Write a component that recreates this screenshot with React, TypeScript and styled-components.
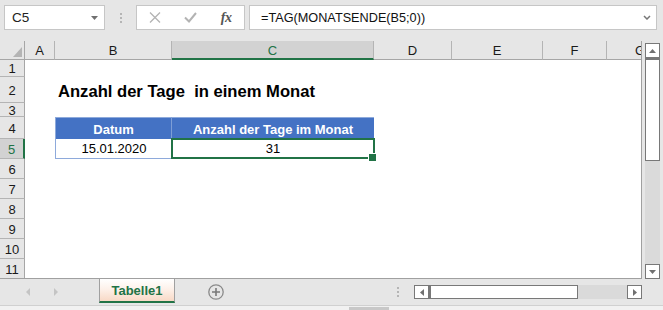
import React from 'react';
import styled, { createGlobalStyle, css } from 'styled-components';

const GlobalStyle = createGlobalStyle`
  html, body { margin: 0; padding: 0; background: #e6e6e6; }
  body { font-family: "Liberation Sans", Arial, sans-serif; }
  * { box-sizing: border-box; }
`;

const GREEN = '#217346';
const UI_FONT = '"Liberation Sans", Arial, sans-serif';

const Page = styled.div`
  width: 663px;
  height: 310px;
  display: flex;
  flex-direction: column;
  background: #e6e6e6;
  overflow: hidden;
  font-family: ${UI_FONT};
`;

/* ---------- formula bar ---------- */
const FormulaBar = styled.div`
  height: 41px;
  flex: none;
  display: flex;
  align-items: flex-start;
  padding: 5px 0 0 4px;
`;

const Box = styled.div`
  height: 25px;
  background: #fff;
  border: 1px solid #c6c6c6;
  display: flex;
  align-items: center;
`;

const NameBox = styled(Box)`
  width: 101px;
  padding: 0 6px 0 7px;
  justify-content: space-between;
  font-size: 13.5px;
  color: #222;
`;

const Grip = styled.div`
  width: 31px;
  height: 25px;
  display: flex;
  flex-direction: column;
  align-items: center;
  justify-content: center;
  gap: 2px;
`;

const GripDot = styled.span`
  width: 2px;
  height: 2px;
  background: #b5b5b5;
`;

const FxBox = styled(Box)`
  width: 109px;
  padding: 0;
`;

const FxSlot = styled.div`
  flex: 1;
  height: 100%;
  display: flex;
  align-items: center;
  justify-content: center;
`;

const FxText = styled.span`
  font-family: "Liberation Serif", "Times New Roman", serif;
  font-style: italic;
  font-weight: 700;
  font-size: 14px;
  color: #555;
  letter-spacing: -0.5px;
`;

const FormulaInput = styled(Box)`
  width: 408px;
  margin-left: 4px;
  padding: 0 5px 0 11px;
  justify-content: space-between;
  font-size: 12.7px;
  color: #111;
`;

/* ---------- sheet ---------- */
const SheetArea = styled.div`
  height: 238px;
  flex: none;
  display: flex;
`;

const Sheet = styled.div`
  width: 642px;
  height: 238px;
  background: #fff;
  border-right: 1px solid #a0a0a0;
  border-bottom: 1px solid #a0a0a0;
  overflow: hidden;
  display: grid;
  grid-template-columns: 25px 30px 117px 202px 78px 91px 64px 66px;
  grid-template-rows: 19px 17px 26px 14px 22px 20px 20px 20px 20px 20px 20px 20px;
  font-family: ${UI_FONT};
`;

const Corner = styled.div`
  background: #e6e6e6;
  border-right: 1px solid #a6a6a6;
  border-bottom: 1px solid #a6a6a6;
  display: flex;
  align-items: flex-end;
  justify-content: flex-end;
  padding: 0 2px 2px 0;
`;

const ColHeader = styled.div<{ $selected?: boolean; $last?: boolean }>`
  display: flex;
  align-items: center;
  justify-content: center;
  font-size: 13px;
  background: ${(p) => (p.$selected ? '#d2d2d2' : '#e6e6e6')};
  color: ${(p) => (p.$selected ? GREEN : '#1a1a1a')};
  border-right: ${(p) => (p.$last ? 'none' : '1px solid #b4b4b4')};
  border-bottom: ${(p) => (p.$selected ? `2px solid ${GREEN}` : '1px solid #a6a6a6')};
  white-space: nowrap;
  overflow: hidden;
  padding-top: 1px;
`;

const RowHeader = styled.div<{ $selected?: boolean }>`
  display: flex;
  align-items: center;
  justify-content: center;
  font-size: 13px;
  background: ${(p) => (p.$selected ? '#d2d2d2' : '#e6e6e6')};
  color: ${(p) => (p.$selected ? GREEN : '#1a1a1a')};
  border-right: ${(p) => (p.$selected ? `2px solid ${GREEN}` : '1px solid #a6a6a6')};
  border-bottom: 1px solid #b4b4b4;
  padding-top: 1px;
`;

const Cell = styled.div``;

const TitleCell = styled.div`
  display: flex;
  align-items: flex-end;
  padding: 0 0 3px 3px;
  font-size: 16.6px;
  line-height: 16.5px;
  font-weight: 700;
  color: #000;
  white-space: pre;
  overflow: visible;
`;

const TableHead = styled.div<{ $first?: boolean }>`
  display: flex;
  align-items: flex-end;
  justify-content: center;
  padding-bottom: 3px;
  background: #4472c4;
  color: #fff;
  font-size: 13px;
  line-height: 13px;
  font-weight: 700;
  border-top: 1px solid #8eaadb;
  border-left: ${(p) => (p.$first ? '1px solid #8eaadb' : 'none')};
  border-right: ${(p) => (p.$first ? '1px solid #7e9ed6' : 'none')};
  white-space: nowrap;
`;

const TableCell = styled.div<{ $first?: boolean; $active?: boolean }>`
  position: relative;
  display: flex;
  align-items: flex-end;
  justify-content: center;
  padding-bottom: 3px;
  background: #fff;
  color: #000;
  font-size: 13px;
  line-height: 13px;
  border-bottom: 1px solid #8eaadb;
  border-left: ${(p) => (p.$first ? '1px solid #8eaadb' : 'none')};
  ${(p) =>
    p.$active &&
    css`
      &::before {
        content: '';
        position: absolute;
        left: -1px;
        top: -1px;
        right: -1px;
        bottom: -1px;
        border: 2px solid ${GREEN};
      }
      &::after {
        content: '';
        position: absolute;
        right: -3px;
        bottom: -4px;
        width: 7px;
        height: 7px;
        background: ${GREEN};
        border: 1px solid #fff;
      }
    `}
`;

/* ---------- scrollbars ---------- */
const VScrollColumn = styled.div`
  width: 21px;
  height: 238px;
  padding: 2px 3px 0 3px;
  display: flex;
  flex-direction: column;
`;

const ScrollButton = styled.div<{ $w?: number; $h?: number }>`
  flex: none;
  width: ${(p) => (p.$w ? `${p.$w}px` : 'auto')};
  height: ${(p) => (p.$h ? `${p.$h}px` : 'auto')};
  background: #fff;
  border: 1px solid #787878;
  display: flex;
  align-items: center;
  justify-content: center;
`;

const VThumb = styled.div`
  flex: none;
  height: 103px;
  background: #fff;
  border: 1px solid #787878;
  border-top-width: 2px;
`;

const VTrack = styled.div`
  flex: 1;
  background: #dadada;
`;

const HScroll = styled.div`
  width: 228px;
  height: 14px;
  margin-left: 15px;
  display: flex;
`;

const HThumb = styled.div`
  width: 149px;
  background: #fff;
  border: 1px solid #787878;
  border-left-width: 2px;
`;

const HTrack = styled.div`
  flex: 1;
  background: #dadada;
`;

/* ---------- tab bar ---------- */
const TabBar = styled.div`
  height: 26px;
  flex: none;
  display: flex;
  align-items: center;
  background: #e6e6e6;
`;

const NavArea = styled.div`
  width: 99px;
  display: flex;
  align-items: center;
  padding-left: 26px;
  gap: 24px;
`;

const SheetTab = styled.div`
  align-self: flex-start;
  width: 76px;
  height: 24px;
  display: flex;
  align-items: center;
  justify-content: center;
  padding-top: 1px;
  background: linear-gradient(#ffffff 0%, #fdf1ea 45%, #f8d9c6 100%);
  border-left: 1px solid #a0a0a0;
  border-right: 1px solid #a0a0a0;
  border-bottom: 2px solid ${GREEN};
  color: ${GREEN};
  font-size: 13px;
  font-weight: 700;
`;

const AddSheet = styled.div`
  margin-left: 33px;
  width: 16px;
  height: 16px;
  display: flex;
`;

const TabGrip = styled(Grip)`
  width: 2px;
  height: 14px;
  margin-left: 173px;
`;

const StatusStrip = styled.div`
  flex: 1;
  border-top: 1px solid #d0d0d0;
  background: #f1f1f1;
  padding: 1px 0 0 349px;
`;

const StatusChunk = styled.div`
  width: 40px;
  height: 4px;
  background: #c8c8c8;
`;

/* ---------- icons ---------- */
const Tri = ({ dir, color = '#777', w = 7, h = 4 }: { dir: 'up' | 'down' | 'left' | 'right'; color?: string; w?: number; h?: number }) => {
  const pts =
    dir === 'down'
      ? `0,0 ${w},0 ${w / 2},${h}`
      : dir === 'up'
      ? `0,${h} ${w},${h} ${w / 2},0`
      : dir === 'left'
      ? `${w},0 ${w},${h} 0,${h / 2}`
      : `0,0 0,${h} ${w},${h / 2}`;
  return (
    <svg width={w} height={h} viewBox={`0 0 ${w} ${h}`} style={{ display: 'block' }}>
      <polygon points={pts} fill={color} />
    </svg>
  );
};

const CancelIcon = () => (
  <svg width="12" height="11" viewBox="0 0 12 11" style={{ display: 'block' }}>
    <path d="M1 0.5 L11 10.5 M11 0.5 L1 10.5" stroke="#b3b3b3" strokeWidth="1.3" fill="none" />
  </svg>
);

const CheckIcon = () => (
  <svg width="13" height="11" viewBox="0 0 13 11" style={{ display: 'block' }}>
    <polyline points="1,5.5 5,9.5 12,1" stroke="#b3b3b3" strokeWidth="2" fill="none" />
  </svg>
);

const Chevron = () => (
  <svg width="8" height="5" viewBox="0 0 8 5" style={{ display: 'block' }}>
    <polyline points="1,1 4,4 7,1" stroke="#777" strokeWidth="1.5" fill="none" />
  </svg>
);

const PlusCircle = () => (
  <svg width="16" height="16" viewBox="0 0 16 16" style={{ display: 'block' }}>
    <circle cx="8" cy="8" r="7.2" stroke="#8a8a8a" strokeWidth="1.3" fill="none" />
    <path d="M8 4 V12 M4 8 H12" stroke="#7a7a7a" strokeWidth="1.6" />
  </svg>
);

const CornerTriangle = () => (
  <svg width="9" height="10" viewBox="0 0 9 10" style={{ display: 'block' }}>
    <polygon points="9,0 9,10 0,10" fill="#b4b4b4" />
  </svg>
);

/* ---------- data ---------- */
const COLUMNS = ['A', 'B', 'C', 'D', 'E', 'F', 'G'];
const ROWS = [1, 2, 3, 4, 5, 6, 7, 8, 9, 10, 11];

function renderCell(col: string, row: number) {
  const key = `${col}${row}`;
  if (row === 2 && col === 'B') return <TitleCell key={key}>Anzahl der Tage  in einem Monat</TitleCell>;
  if (row === 4 && col === 'B') return <TableHead key={key} $first>Datum</TableHead>;
  if (row === 4 && col === 'C') return <TableHead key={key}>Anzahl der Tage im Monat</TableHead>;
  if (row === 5 && col === 'B') return <TableCell key={key} $first>15.01.2020</TableCell>;
  if (row === 5 && col === 'C') return <TableCell key={key} $active>31</TableCell>;
  return <Cell key={key} />;
}

export default function App() {
  return (
    <>
      <GlobalStyle />
      <Page>
        <FormulaBar>
          <NameBox>
            <span>C5</span>
            <Tri dir="down" w={7} h={4} color="#707070" />
          </NameBox>
          <Grip>
            <GripDot />
            <GripDot />
            <GripDot />
          </Grip>
          <FxBox>
            <FxSlot>
              <CancelIcon />
            </FxSlot>
            <FxSlot>
              <CheckIcon />
            </FxSlot>
            <FxSlot>
              <FxText>fx</FxText>
            </FxSlot>
          </FxBox>
          <FormulaInput>
            <span>=TAG(MONATSENDE(B5;0))</span>
            <Chevron />
          </FormulaInput>
        </FormulaBar>

        <SheetArea>
          <Sheet>
            <Corner>
              <CornerTriangle />
            </Corner>
            {COLUMNS.map((c, i) => (
              <ColHeader key={c} $selected={c === 'C'} $last={i === COLUMNS.length - 1}>
                {c}
              </ColHeader>
            ))}
            {ROWS.map((r) => (
              <React.Fragment key={r}>
                <RowHeader $selected={r === 5}>{r}</RowHeader>
                {COLUMNS.map((c) => renderCell(c, r))}
              </React.Fragment>
            ))}
          </Sheet>
          <VScrollColumn>
            <ScrollButton $h={15}>
              <Tri dir="up" w={7} h={4} color="#707070" />
            </ScrollButton>
            <VThumb />
            <VTrack />
            <ScrollButton $h={15}>
              <Tri dir="down" w={7} h={4} color="#707070" />
            </ScrollButton>
          </VScrollColumn>
        </SheetArea>

        <TabBar>
          <NavArea>
            <Tri dir="left" w={4} h={8} color="#c4c4c4" />
            <Tri dir="right" w={4} h={8} color="#c4c4c4" />
          </NavArea>
          <SheetTab>Tabelle1</SheetTab>
          <AddSheet>
            <PlusCircle />
          </AddSheet>
          <TabGrip>
            <GripDot />
            <GripDot />
            <GripDot />
          </TabGrip>
          <HScroll>
            <ScrollButton $w={15}>
              <Tri dir="left" w={4} h={7} color="#707070" />
            </ScrollButton>
            <HThumb />
            <HTrack />
            <ScrollButton $w={15}>
              <Tri dir="right" w={4} h={7} color="#707070" />
            </ScrollButton>
          </HScroll>
        </TabBar>
        <StatusStrip>
          <StatusChunk />
        </StatusStrip>
      </Page>
    </>
  );
}
